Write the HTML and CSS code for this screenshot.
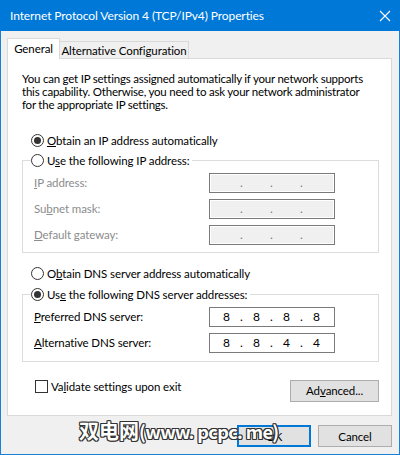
FILE: index.html
```html
<!DOCTYPE html>
<html>
<head>
<meta charset="utf-8">
<link rel="stylesheet" href="styles.css">
</head>
<body>
<div class="window">
  <div class="titlebar">
    <span class="title">Internet Protocol Version 4 (TCP/IPv4) Properties</span>
    <svg class="close" width="12" height="12" viewBox="0 0 12 12"><path d="M1 1 L11 11 M11 1 L1 11" stroke="#fff" stroke-width="1.1" fill="none"/></svg>
  </div>
  <div class="body">
    <div class="tabs">
      <div class="tab active">General</div>
      <div class="tab">Alternative Configuration</div>
    </div>
    <div class="panel">
      <div class="desc"><div>You can get IP settings assigned automatically if your network supports</div><div>this capability. Otherwise, you need to ask your network administrator</div><div>for the appropriate IP settings.</div></div>
      <div class="option first"><span class="radio checked"></span><span><u>O</u>btain an IP address automatically</span></div>
      <fieldset class="group ipgroup">
        <legend><span class="radio"></span><span>U<u>s</u>e the following IP address:</span></legend>
        <div class="row disabled"><span class="lbl"><u>I</u>P address:</span><div class="ipbox off"><span class="oct"></span><span class="dot">.</span><span class="oct"></span><span class="dot">.</span><span class="oct"></span><span class="dot">.</span><span class="oct"></span></div></div>
        <div class="row disabled"><span class="lbl">Su<u>b</u>net mask:</span><div class="ipbox off"><span class="oct"></span><span class="dot">.</span><span class="oct"></span><span class="dot">.</span><span class="oct"></span><span class="dot">.</span><span class="oct"></span></div></div>
        <div class="row disabled"><span class="lbl"><u>D</u>efault gateway:</span><div class="ipbox off"><span class="oct"></span><span class="dot">.</span><span class="oct"></span><span class="dot">.</span><span class="oct"></span><span class="dot">.</span><span class="oct"></span></div></div>
      </fieldset>
      <div class="option dnsauto"><span class="radio"></span><span>O<u>b</u>tain DNS server address automatically</span></div>
      <fieldset class="group dnsgroup">
        <legend><span class="radio checked"></span><span>Us<u>e</u> the following DNS server addresses:</span></legend>
        <div class="row"><span class="lbl"><u>P</u>referred DNS server:</span><div class="ipbox"><span class="oct">8</span><span class="dot">.</span><span class="oct">8</span><span class="dot">.</span><span class="oct">8</span><span class="dot">.</span><span class="oct">8</span></div></div>
        <div class="row"><span class="lbl"><u>A</u>lternative DNS server:</span><div class="ipbox"><span class="oct">8</span><span class="dot">.</span><span class="oct">8</span><span class="dot">.</span><span class="oct">4</span><span class="dot">.</span><span class="oct">4</span></div></div>
      </fieldset>
      <div class="footer-row">
        <div class="check"><span class="checkbox"></span><span>Va<u>l</u>idate settings upon exit</span></div>
        <button class="btn adv">Ad<u>v</u>anced...</button>
      </div>
    </div>
    <div class="buttons">
      <button class="btn ok">OK</button>
      <button class="btn">Cancel</button>
    </div>
  </div>
  <div class="watermark">双电网<span class="wm-latin">(www. pcpc. me)</span></div>
</div>
</body>
</html>
```
FILE: styles.css
```css
* { box-sizing: border-box; }
html, body { margin: 0; padding: 0; }
body {
  width: 400px; height: 455px; overflow: hidden;
  font-family: Lato, "Liberation Sans", sans-serif;
  font-size: 11.5px; letter-spacing: -0.1px; color: #000; white-space: nowrap;
}
.window {
  position: relative;
  width: 400px; height: 455px;
  border: 1px solid #1a7fd6;
  border-top: 0;
  background: #f0f0f0;
}
.titlebar {
  height: 31px;
  background: #0078d7;
  color: #fff;
  display: flex; align-items: center;
  margin: 0 -1px;
  padding-left: 10px;
}
.title { flex: 1; font-size: 12px; letter-spacing: -0.1px; }
.close { margin-right: 9px; }
.body { padding: 7px 0 0 6px; }
.tabs { display: flex; align-items: flex-end; height: 20px; position: relative; z-index: 2; }
.tab {
  height: 17px;
  border: 1px solid #d9d9d9; border-bottom: 0;
  background: #f0f0f0;
  padding: 0;
  display: flex; align-items: center; justify-content: center;
  width: 130px; margin-left: -1px;
}
.tab.active {
  height: 21px; width: 53px; margin-left: 0;
  background: #fff; margin-bottom: -1px;
  position: relative; z-index: 2;
  padding-bottom: 1px;
}
.panel {
  width: 385px; height: 358px;
  border: 1px solid #d9d9d9;
  background: #fff;
  padding: 12px 12px 0 14px;
}
.desc { margin: 0; padding-top: 0.5px; letter-spacing: -0.22px; }
.desc div { height: 13px; line-height: 13px; }
.option { display: flex; align-items: center; height: 13px; padding-left: 9px; gap: 3px; }
.option.first { margin-top: 23px; }
.option.dnsauto { margin-top: 14px; }
.radio {
  width: 13px; height: 13px; border: 1px solid #333; border-radius: 50%;
  background: #fff; display: inline-flex; align-items: center; justify-content: center;
  flex: none;
}
.radio.checked::after { content: ""; width: 7px; height: 7px; border-radius: 50%; background: #333; }
.group {
  width: 357px; margin: 0; padding: 0 0 7px 11px;
  border: 1px solid #dcdcdc; min-width: 0;
}
.ipgroup { margin-top: 7px; }
.dnsgroup { margin-top: 8px; }
.group legend {
  display: flex; align-items: center; gap: 3px;
  height: 13px; padding: 0 3px 0 0; margin-left: -3px;
}
.row { display: flex; align-items: center; height: 20px; margin-top: 6px; }
.dnsgroup { padding-bottom: 8px; }
.lbl { width: 175px; flex: none; }
.disabled .lbl { color: #8c8c8c; }
.ipbox {
  width: 126px; height: 20px; border: 1px solid #7a7a7a; background: #fff;
  display: flex; align-items: center; padding-left: 4px; letter-spacing: 0;
  font-size: 12px;
}
.ipbox.off { background: #f0f0f0; box-shadow: inset 0 0 0 1px #fff; }
.oct { width: 25px; text-align: center; }
.dot { width: 5px; text-align: center; }
.off .dot { color: #7a7a8a; }
.footer-row { display: flex; justify-content: space-between; align-items: flex-start; width: 357px; margin-top: 18px; }
.check { display: flex; align-items: center; gap: 3px; height: 13px; margin-left: 13px; }
.checkbox { width: 13px; height: 13px; border: 1px solid #333; background: #fff; }
.btn {
  font-family: inherit; font-size: 11.5px; letter-spacing: -0.1px; color: #000;
  height: 22px; background: #e1e1e1; border: 1px solid #adadad; padding: 0;
  margin: 0;
}
.adv { width: 89px; }
.buttons { display: flex; justify-content: flex-end; gap: 7px; width: 385px; margin-top: 9px; }
.buttons .btn { width: 74px; }
.btn.ok { border: 2px solid #0078d7; }
.watermark {
  position: absolute; left: 78px; top: 419px;
  font-family: "Noto Sans CJK SC", sans-serif; font-weight: bold; letter-spacing: 0;
  font-size: 20px; line-height: 24px; color: #fff;
  text-shadow: 1px 0 #333, -1px 0 #333, 0 1px #333, 0 -1px #333, 1px 1px #333, -1px -1px #333, 1px -1px #333, -1px 1px #333;
}
.wm-latin { font-size: 18px; letter-spacing: -0.6px; }
```
